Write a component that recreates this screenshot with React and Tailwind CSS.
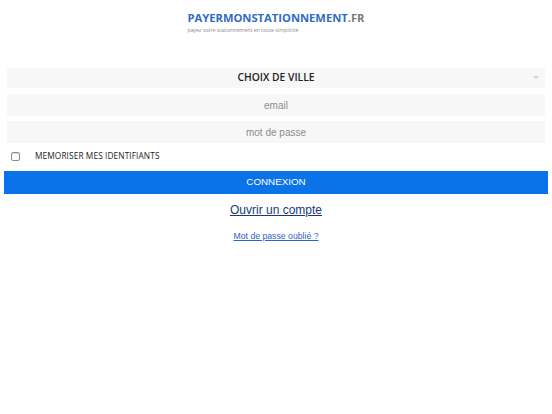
import { useState } from "react";

function Logo() {
  return (
    <div className="flex justify-center pt-[11px]">
      <div className="flex flex-col">
        <div className="text-[11.2px] font-bold leading-[14px] font-['Open_Sans',sans-serif]">
          <span className="text-[#2f6cc3]">PAYERMONSTATIONNEMENT</span>
          <span className="text-[#7a7a7a]">.FR</span>
        </div>
        <span className="text-[5.2px] leading-[7px] text-[#8a8a8a] font-['Open_Sans',sans-serif] mt-[2px]">
          payez votre stationnement en toute simplicité
        </span>
      </div>
    </div>
  );
}

function App() {
  const [remember, setRemember] = useState(false);

  return (
    <div className="min-h-screen bg-white font-['Liberation_Sans',Arial,sans-serif]">
      <Logo />

      <div className="mt-[34px] px-[7px] flex flex-col">
        <div className="relative h-[20px] bg-[#f7f7f7] flex items-center justify-center">
          <span className="text-[10.3px] font-semibold text-[#222] font-['Open_Sans',sans-serif]">
            CHOIX DE VILLE
          </span>
          <span className="absolute right-[6px] top-[8px] w-0 h-0 border-l-[3px] border-r-[3px] border-t-[3px] border-l-transparent border-r-transparent border-t-[#d4d4d4]" />
        </div>

        <input
          placeholder="email"
          className="mt-[6px] h-[22px] bg-[#f7f7f7] text-center text-[10px] text-[#555] placeholder:text-[#8c8c8c] outline-none"
        />
        <input
          type="password"
          placeholder="mot de passe"
          className="mt-[5px] h-[22px] bg-[#f7f7f7] text-center text-[10px] text-[#555] placeholder:text-[#8c8c8c] outline-none"
        />

        <label className="mt-[5px] h-[16px] flex items-center gap-[15px] pl-[4px]">
          <input
            type="checkbox"
            checked={remember}
            onChange={() => setRemember(!remember)}
            className="w-[9px] h-[9px] appearance-none rounded-[2px] border border-[#8d8d8d] bg-white shadow-[inset_0_1px_1px_rgba(0,0,0,0.15)]"
          />
          <span className="text-[8.3px] text-[#222] font-['Open_Sans',sans-serif] tracking-[0.1px]">
            MEMORISER MES IDENTIFIANTS
          </span>
        </label>
      </div>

      <div className="px-[4px] mt-[4px]">
        <button className="w-full h-[23px] bg-[#0a73ea] text-white text-[9.8px]">
          CONNEXION
        </button>
      </div>

      <div className="flex flex-col items-center">
        <a href="#" className="mt-[8px] text-[12px] leading-[16px] text-[#173a75] underline">
          Ouvrir un compte
        </a>
        <a href="#" className="mt-[13px] text-[8.7px] leading-[11px] text-[#2d63c8] underline">
          Mot de passe oublié ?
        </a>
      </div>
    </div>
  );
}

export default App;
